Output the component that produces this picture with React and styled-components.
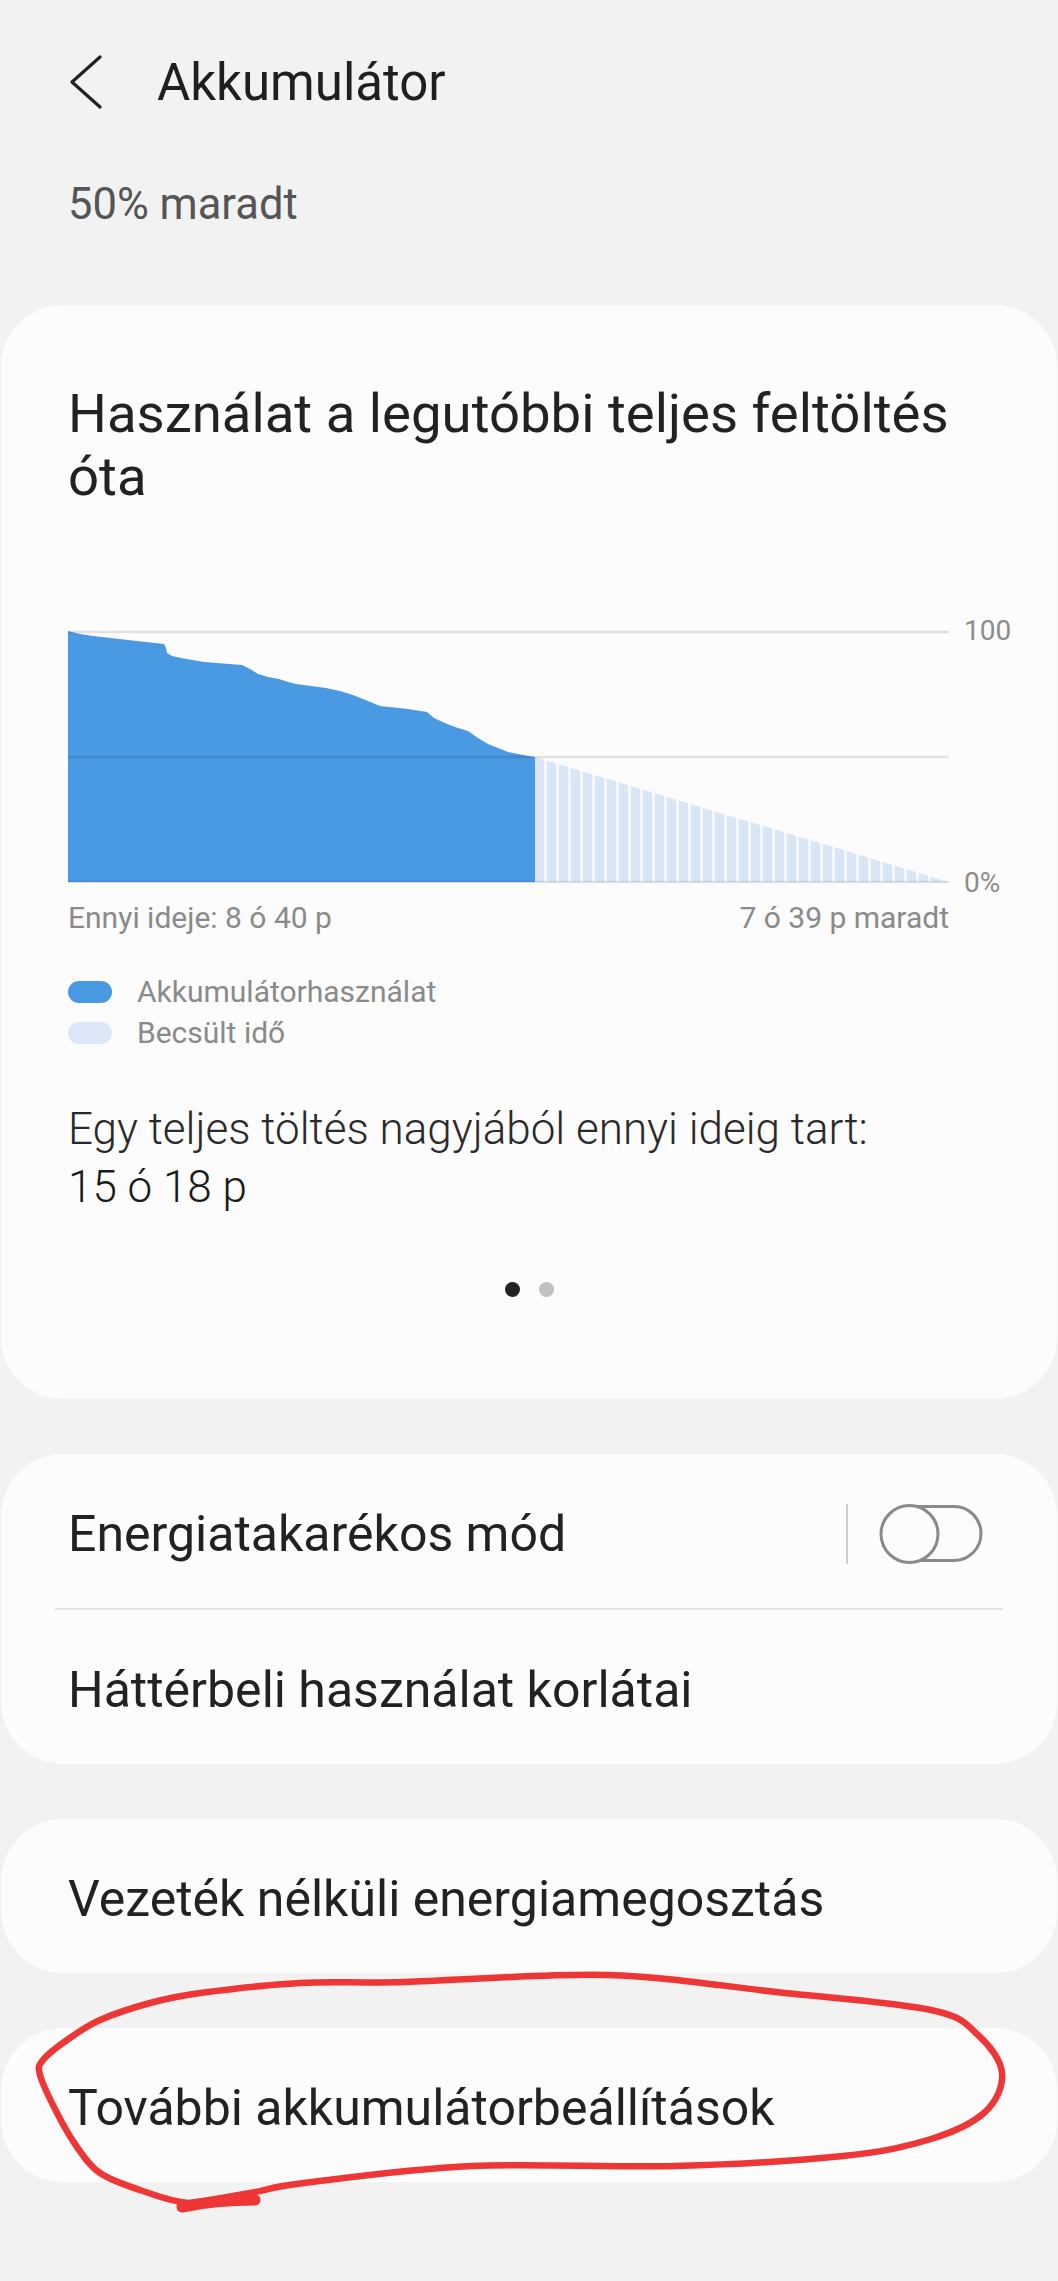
import React from 'react';
import styled, { createGlobalStyle } from 'styled-components';

const GlobalStyle = createGlobalStyle`
  html, body {
    margin: 0;
    padding: 0;
    background: #f2f2f2;
  }
  body {
    font-family: Roboto, "Noto Sans", sans-serif;
    color: #222;
  }
`

const Page = styled.div`
  position: relative;
  width: 1058px;
  min-height: 2281px;
  background: #f2f2f2;
  overflow: hidden;
`

const Header = styled.div`
  display: flex;
  align-items: center;
  height: 164px;
  padding-left: 69px;
  gap: 54px;
  svg {
    display: block;
  }
`

const Title = styled.h1`
  margin: 0;
  font-size: 51px;
  font-weight: 400;
  color: #1f1f1f;
  line-height: 1;
`

const Remaining = styled.div`
  margin: 16px 0 75px 68px;
  font-size: 43.5px;
  line-height: 50px;
  color: #555;
`

const Card = styled.section`
  background: #fcfcfc;
  border-radius: 62px;
  margin: 0 1px ${p => p.gap || 55}px;
  padding: ${p => p.pad || '0'};
  overflow: hidden;
`

const Heading = styled.h2`
  margin: 0;
  max-width: 905px;
  font-size: 54.5px;
  font-weight: 400;
  line-height: 63px;
  color: #222;
`

const ChartRow = styled.div`
  display: flex;
  align-items: flex-start;
  gap: 15px;
  margin-top: 123px;
`

const Plot = styled.svg`
  display: block;
  width: 881px;
  height: 252px;
  overflow: visible;
`

const Axis = styled.div`
  display: flex;
  flex-direction: column;
  justify-content: space-between;
  height: 282px;
  margin: -15px 0;
  font-size: 28px;
  line-height: 30px;
  color: #8c8c8c;
`

const TimeRow = styled.div`
  display: flex;
  justify-content: space-between;
  width: 881px;
  margin-top: 17px;
  font-size: 30px;
  line-height: 36px;
  color: #8a8a8a;
`

const Legend = styled.div`
  margin-top: 35px;
  display: flex;
  flex-direction: column;
`

const LegendItem = styled.div`
  display: flex;
  align-items: center;
  gap: 25px;
  height: 41px;
  font-size: 30px;
  color: #8a8a8a;
`

const Swatch = styled.span`
  width: 44px;
  height: 22px;
  border-radius: 11px;
  background: ${p => p.color};
`

const Estimate = styled.div`
  margin-top: 47px;
  font-size: 44px;
  font-weight: 300;
  line-height: 58px;
  color: #2a2a2a;
  strong {
    display: block;
    font-weight: 300;
    color: #1a1a1a;
  }
`

const Dots = styled.div`
  display: flex;
  justify-content: center;
  gap: 19px;
  margin-top: 66px;
  margin-left: -67px;
  margin-right: -67px;
`

const Dot = styled.span`
  width: 15px;
  height: 15px;
  border-radius: 50%;
  background: ${p => (p.active ? '#222' : '#c0c0c0')};
`

const Row = styled.div`
  display: flex;
  align-items: center;
  height: ${p => p.h || 154}px;
  box-sizing: border-box;
  padding: 6px 73px 0 67px;
  font-size: 50px;
  color: #222;
`

const Label = styled.span`
  flex: 1;
`

const Divider = styled.span`
  width: 2px;
  height: 60px;
  background: #cfcfcf;
  margin-right: 30px;
`

const Separator = styled.div`
  height: 2px;
  margin: 0 54px;
  background: #e4e4e4;
`

const Scribble = styled.svg`
  position: absolute;
  left: 0;
  top: 1950px;
  width: 1058px;
  height: 270px;
  pointer-events: none;
`

const usage = [
  [0, 0], [12, 3], [25, 5], [60, 9], [96, 13], [98, 17], [99, 22], [104, 25],
  [113, 27], [136, 31], [174, 34], [182, 38], [190, 43], [200, 46], [211, 48],
  [220, 51], [228, 53], [258, 57], [272, 60], [285, 64], [300, 70], [312, 75],
  [340, 78], [359, 81], [366, 87], [379, 93], [390, 97], [400, 100], [410, 107],
  [420, 113], [440, 121], [455, 124], [467, 126],
]

const loop = [
  [256, 250], [189, 253], [140, 240], [100, 223], [77, 197], [57, 163], [40, 125],
  [43, 110], [67, 90], [100, 70], [150, 53], [200, 43], [300, 33], [405, 32],
  [607, 25], [776, 42], [931, 60], [978, 85], [1002, 123], [985, 162], [931, 189],
  [843, 206], [675, 216], [472, 216], [304, 233], [250, 243], [180, 255],
]

// catmull-rom -> cubic bezier
const smooth = pts => {
  let d = `M ${pts[0][0]} ${pts[0][1]}`
  for (let i = 0; i < pts.length - 1; i++) {
    const p0 = pts[i - 1] || pts[i]
    const p1 = pts[i]
    const p2 = pts[i + 1]
    const p3 = pts[i + 2] || p2
    const c1 = [p1[0] + (p2[0] - p0[0]) / 6, p1[1] + (p2[1] - p0[1]) / 6]
    const c2 = [p2[0] - (p3[0] - p1[0]) / 6, p2[1] - (p3[1] - p1[1]) / 6]
    d += ` C ${c1[0]} ${c1[1]} ${c2[0]} ${c2[1]} ${p2[0]} ${p2[1]}`
  }
  return d
}

const BackIcon = () => (
  <svg width="34" height="54" viewBox="0 0 34 54">
    <path d="M31 2 L3 27 L31 52" fill="none" stroke="#222" strokeWidth="3.2" strokeLinecap="round" strokeLinejoin="round" />
  </svg>
)

const Toggle = () => (
  <svg width="106" height="62" viewBox="0 0 106 62">
    <rect x="8" y="3.5" width="95" height="54" rx="27" fill="none" stroke="#8a8a8a" strokeWidth="3" />
    <circle cx="31.5" cy="31" r="28.5" fill="#fcfcfc" stroke="#8a8a8a" strokeWidth="3" />
  </svg>
)

const UsageChart = () => {
  const blue = 'M ' + usage.map(p => p.join(' ')).join(' L ') + ' L 467 251 L 0 251 Z'
  return (
    <Plot viewBox="0 0 881 252">
      <defs>
        <pattern id="stripes" width="12" height="252" patternUnits="userSpaceOnUse" x="467">
          <rect width="12" height="252" fill="#d9e6f6" />
          <rect x="9" width="3" height="252" fill="#f4f8fd" />
        </pattern>
      </defs>
      <path d="M 467 126 L 881 251 L 467 251 Z" fill="url(#stripes)" />
      <path d={blue} fill="#4a99e3" />
      {[1, 126, 251].map(y => (
        <line key={y} x1="0" x2="881" y1={y} y2={y} stroke="rgba(0,0,0,0.1)" strokeWidth="2.5" />
      ))}
    </Plot>
  )
}

export default function App() {
  return (
    <Page>
      <GlobalStyle />
      <Header>
        <BackIcon />
        <Title>Akkumulátor</Title>
      </Header>
      <Remaining>50% maradt</Remaining>

      <Card pad="77px 67px 102px" >
        <Heading>Használat a legutóbbi teljes feltöltés óta</Heading>
        <ChartRow>
          <UsageChart />
          <Axis>
            <span>100</span>
            <span>0%</span>
          </Axis>
        </ChartRow>
        <TimeRow>
          <span>Ennyi ideje: 8 ó 40 p</span>
          <span>7 ó 39 p maradt</span>
        </TimeRow>
        <Legend>
          <LegendItem><Swatch color="#4a99e3" />Akkumulátorhasználat</LegendItem>
          <LegendItem><Swatch color="#dde7f8" />Becsült idő</LegendItem>
        </Legend>
        <Estimate>
          Egy teljes töltés nagyjából ennyi ideig tart:
          <strong>15 ó 18 p</strong>
        </Estimate>
        <Dots>
          <Dot active />
          <Dot />
        </Dots>
      </Card>

      <Card>
        <Row h={154}>
          <Label>Energiatakarékos mód</Label>
          <Divider />
          <Toggle />
        </Row>
        <Separator />
        <Row h={154}>
          <Label>Háttérbeli használat korlátai</Label>
        </Row>
      </Card>

      <Card>
        <Row>
          <Label>Vezeték nélküli energiamegosztás</Label>
        </Row>
      </Card>

      <Card gap={100}>
        <Row>
          <Label>További akkumulátorbeállítások</Label>
        </Row>
      </Card>

      <Scribble viewBox="0 0 1058 270">
        <path d={smooth(loop)} fill="none" stroke="#ee3636" strokeWidth="6.5" strokeLinecap="round" strokeLinejoin="round" />
        <path d="M 182 257 Q 215 250 255 250" fill="none" stroke="#ee3636" strokeWidth="11" strokeLinecap="round" />
      </Scribble>
    </Page>
  )
}
